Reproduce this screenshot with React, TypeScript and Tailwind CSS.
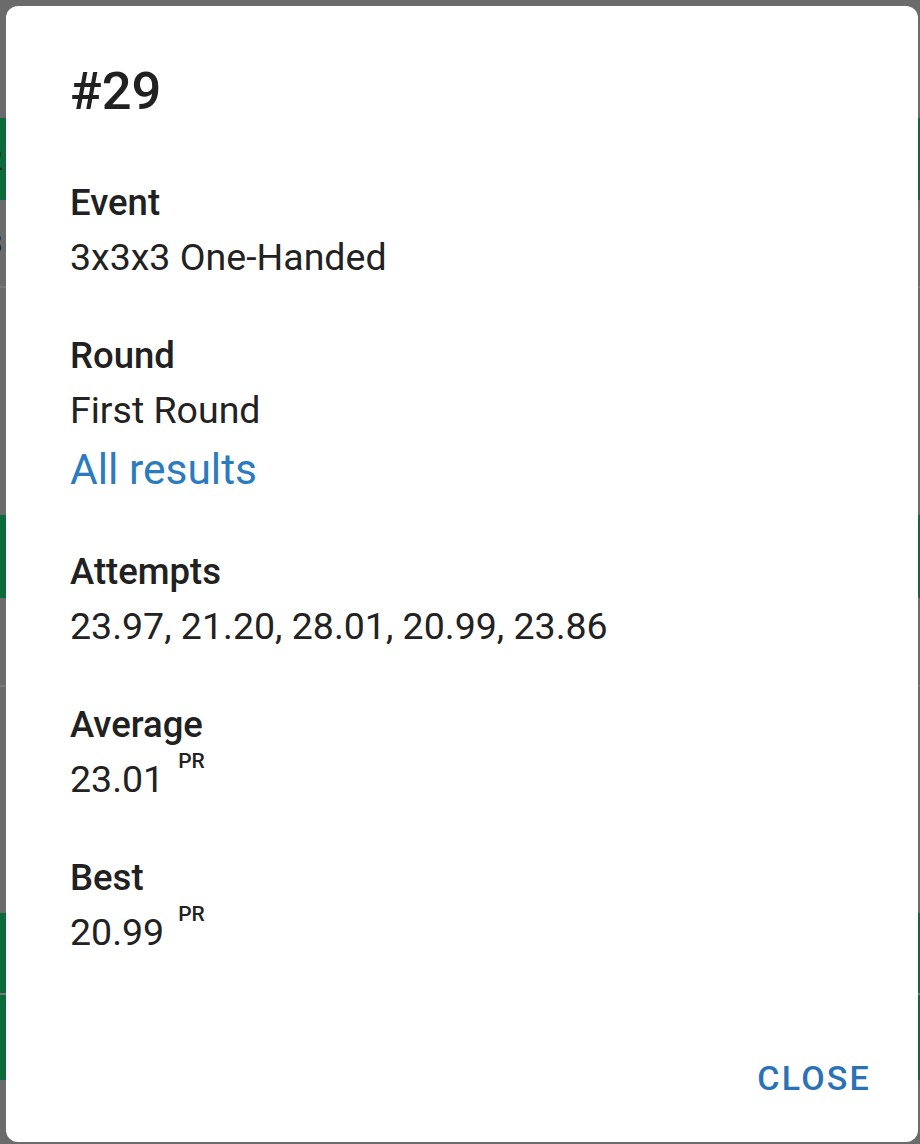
import React from 'react'

type Row = { h: string; tone: 'grey' | 'green'; glyph?: string; line?: boolean }

const backRows: Row[] = [
    { h: 'h-[118px]', tone: 'grey' },
    { h: 'h-[82px]', tone: 'green', glyph: '2' },
    { h: 'h-[88px]', tone: 'grey', glyph: '3', line: true },
    { h: 'h-[227px]', tone: 'grey', glyph: '-' },
    { h: 'h-[83px]', tone: 'green' },
    { h: 'h-[89px]', tone: 'grey', line: true },
    { h: 'h-[226px]', tone: 'grey', glyph: '-' },
    { h: 'h-[82px]', tone: 'green', line: true },
    { h: 'h-[85px]', tone: 'green' },
]

const Field = ({ label, value, pr }: { label: string; value: string; pr?: boolean }) => (
    <div className="mb-[43px]">
        <div className="text-[36.5px] leading-[55px] font-medium text-[#212121]">{label}</div>
        <div className="text-[37.5px] leading-[55px] text-[#222222]">
            {value}
            {pr && <sup className="ml-[14px] align-top text-[21px] leading-[39px] font-medium">PR</sup>}
        </div>
    </div>
)

export default function App() {
    return (
        <div className="relative h-[1144px] w-[920px] overflow-hidden bg-[#6b6b6b] font-['Roboto',sans-serif]">
            {/* list behind the dialog, only a sliver shows on the left */}
            <div className="flex flex-col">
                {backRows.map((r, i) => (
                    <div
                        key={i}
                        className={`${r.h} flex items-center ${r.tone === 'green' ? 'bg-[#0b6b3b]' : 'bg-[#6b6b6b]'} ${r.line ? 'border-b-2 border-[#7a7a7a]' : ''}`}
                    >
                        {r.glyph && <span className="-ml-[14px] text-[30px] text-[#1a1a1a]">{r.glyph}</span>}
                    </div>
                ))}
            </div>

            <div className="absolute inset-0 pt-[6px] pl-[6px] pr-[2px] pb-[2px]">
                <div className="flex h-full flex-col rounded-[12px] bg-white pl-[64px] pr-[47px] pt-[53px]">
                    <h1 className="mb-[52px] text-[52.5px] leading-[64px] font-medium text-[#212121]">#29</h1>

                    <Field label="Event" value="3x3x3 One-Handed" />

                    <div className="mb-[43px]">
                        <div className="text-[36.5px] leading-[55px] font-medium text-[#212121]">Round</div>
                        <div className="text-[37.5px] leading-[55px] text-[#222222]">First Round</div>
                        <a href="#" className="block text-[42.5px] leading-[63px] text-[#2b7bbf]">
                            All results
                        </a>
                    </div>

                    <Field label="Attempts" value="23.97, 21.20, 28.01, 20.99, 23.86" />
                    <Field label="Average" value="23.01" pr />
                    <Field label="Best" value="20.99" pr />

                    <div className="mt-auto mb-[40px] flex justify-end">
                        <button className="text-[34px] leading-[48px] font-medium tracking-[0.065em] text-[#2a72b5]">
                            CLOSE
                        </button>
                    </div>
                </div>
            </div>
        </div>
    )
}
